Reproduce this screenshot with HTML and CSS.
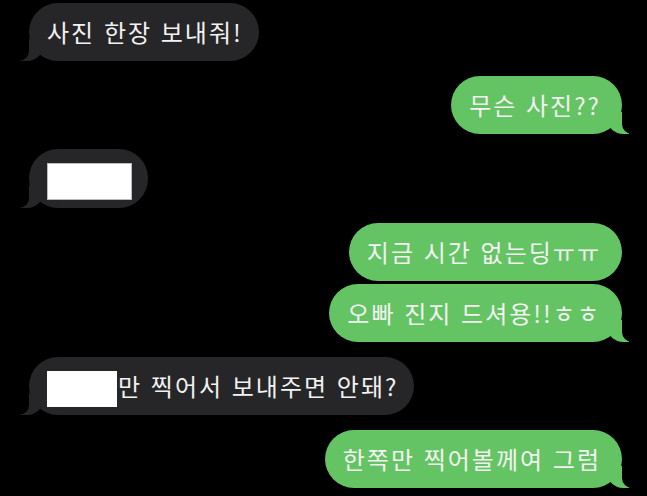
FILE: index.html
```html
<!DOCTYPE html>
<html lang="ko">
<head>
  <meta charset="UTF-8">
  <meta name="viewport" content="width=device-width, initial-scale=1.0">
  <title>메시지</title>
  <link rel="stylesheet" href="styles.css">
</head>
<body>

<div class="chat">
  <div class="msg them first">사진 한장 보내줘!</div>
  <div class="msg me gap">무슨 사진??</div>
  <div class="msg them gap"><span class="blank wide"></span></div>
  <div class="msg me gap no-tail">지금 시간 없는딩ㅠㅠ</div>
  <div class="msg me close">오빠 진지 드셔용!!ㅎㅎ</div>
  <div class="msg them gap"><span class="blank"></span>만 찍어서 보내주면 안돼?</div>
  <div class="msg me gap">한쪽만 찍어볼께여 그럼</div>
</div>

</body>
</html>
```

FILE: styles.css
```css
body {
  margin: 0;
  padding: 0;
  background-color: #000;
  font-family: "Noto Sans CJK KR", "Noto Sans", sans-serif;
}
.chat {
  display: flex;
  flex-direction: column;
  padding: 3px 25px 0 29px;
}
.msg {
  position: relative;
  padding: 12px 16px 12px 18px;
  font-size: 24px;
  line-height: 34px;
  letter-spacing: 2px;
  color: #f2f2f2;
  border-radius: 29px;
  white-space: nowrap;
}
.them {
  align-self: flex-start;
  background-color: #262628;
}
.me {
  align-self: flex-end;
  background-color: #64c463;
  padding-right: 21px;
}
.gap {
  margin-top: 15px;
}
.close {
  margin-top: 3px;
}

/* 말풍선 꼬리 */
.msg::before,
.msg::after {
  content: "";
  position: absolute;
  bottom: 0;
  height: 22px;
}
.them::before {
  left: -9px;
  width: 24px;
  background-color: #262628;
  border-bottom-right-radius: 17px;
}
.them::after {
  left: -12px;
  width: 12px;
  background-color: #000;
  border-bottom-right-radius: 10px;
}
.me::before {
  right: -7px;
  width: 22px;
  background-color: #64c463;
  border-bottom-left-radius: 16px;
}
.me::after {
  right: -10px;
  width: 10px;
  background-color: #000;
  border-bottom-left-radius: 10px;
}
.no-tail::before,
.no-tail::after {
  display: none;
}

/* 가려진 부분 */
.blank {
  display: inline-block;
  width: 70px;
  height: 36px;
  margin: -4px 1px -4px 0;
  background-color: #fff;
  vertical-align: middle;
}
.blank.wide {
  width: 85px;
  height: 37px;
  margin-right: 0;
  border: 1px solid #bbb;
  box-sizing: border-box;
}
```
